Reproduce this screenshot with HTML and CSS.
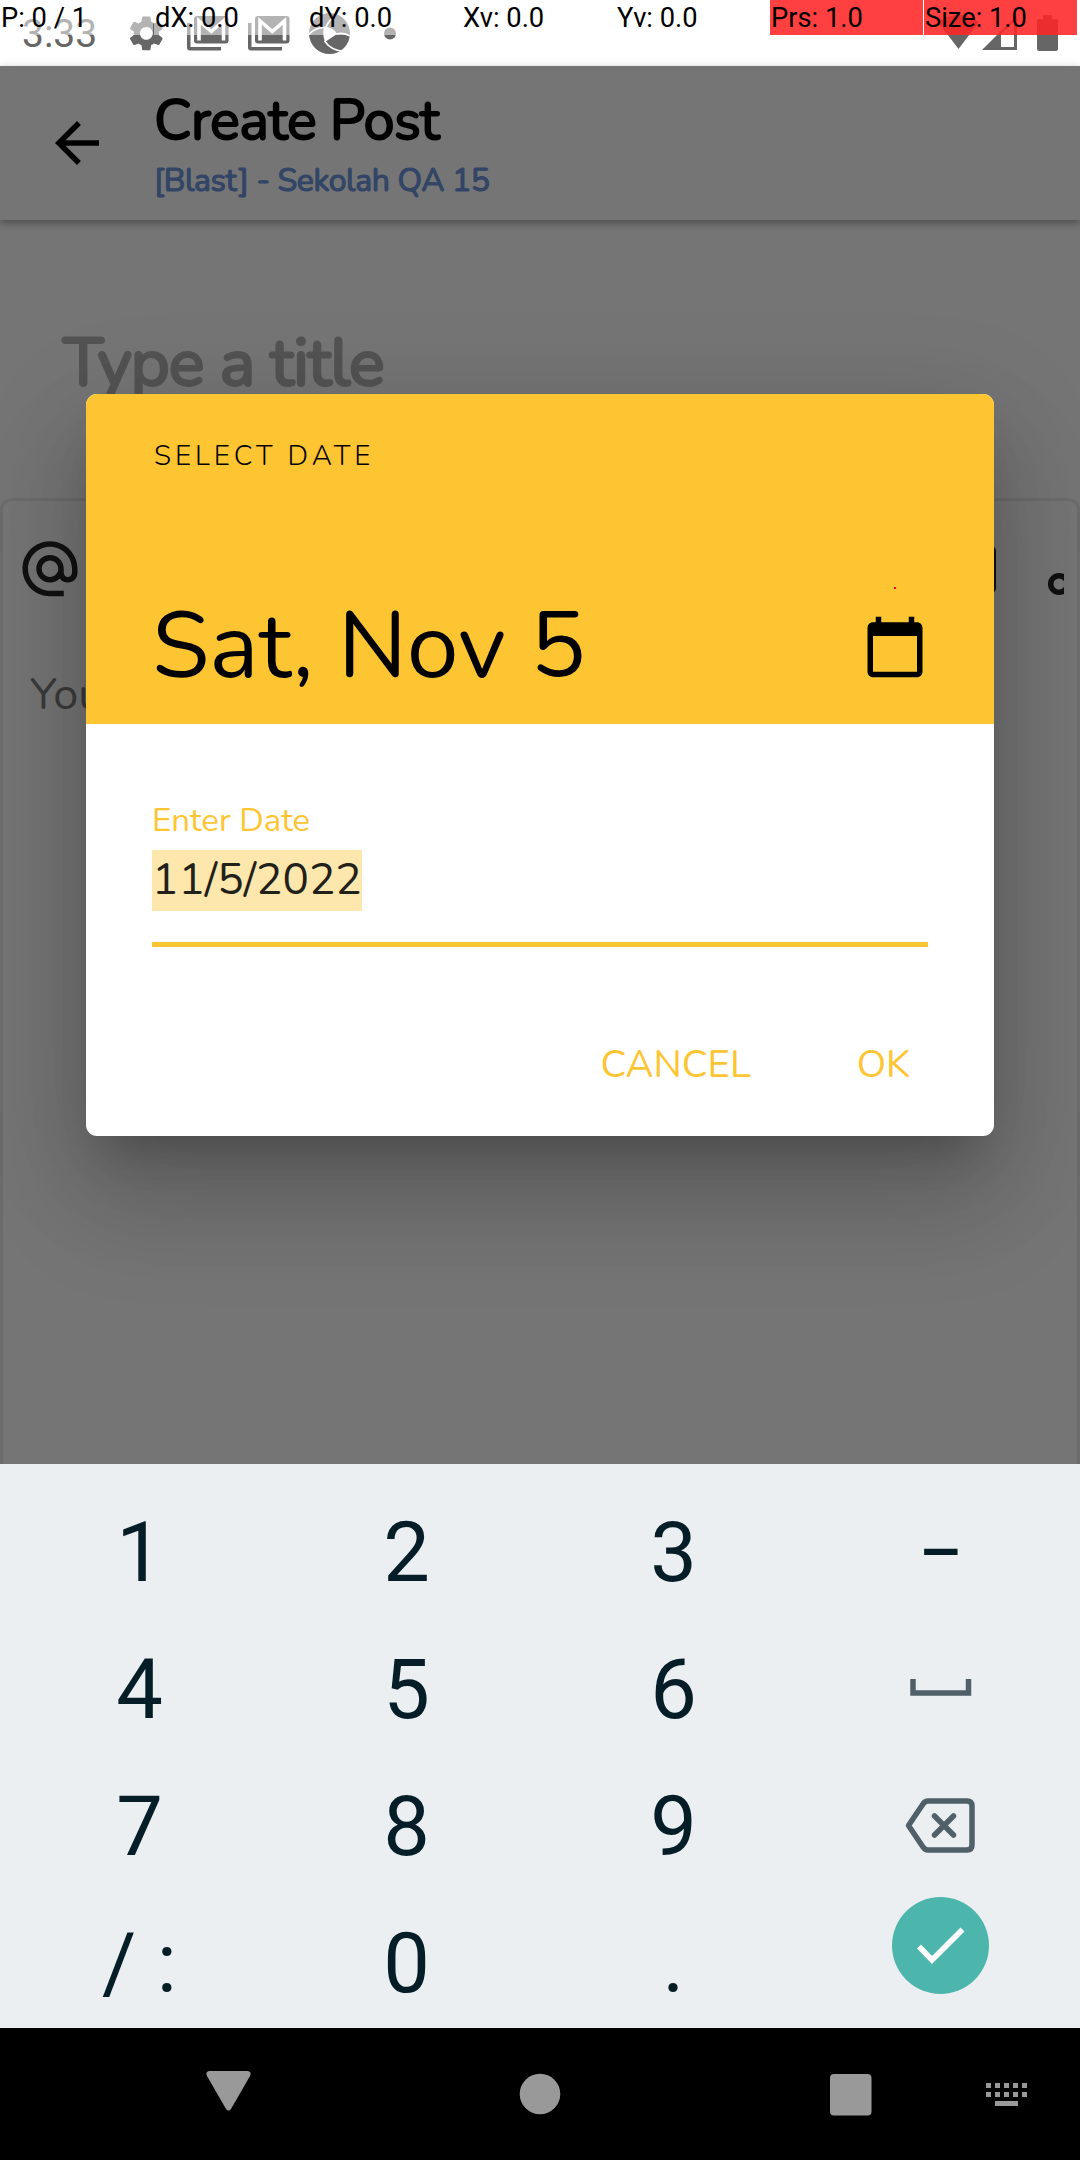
FILE: index.html
```html
<!DOCTYPE html>
<html lang="en">
<head>
<meta charset="utf-8">
<title>Create Post</title>
<link rel="stylesheet" href="styles.css">
</head>
<body>
<div class="phone">
  <div class="statusbar">
    <span class="clock">3:33</span>
    <svg class="status-icons" width="280" height="66" viewBox="120 0 280 66">
      <g transform="translate(125.3 12.4) scale(1.75)"><path d="M19.14 12.94c.04-.3.06-.61.06-.94 0-.32-.02-.64-.07-.94l2.03-1.58c.18-.14.23-.41.12-.61l-1.92-3.32c-.12-.22-.37-.29-.59-.22l-2.39.96c-.5-.38-1.03-.7-1.62-.94l-.36-2.54c-.04-.24-.24-.41-.48-.41h-3.84c-.24 0-.43.17-.47.41l-.36 2.54c-.59.24-1.13.57-1.62.94l-2.39-.96c-.22-.08-.47 0-.59.22L2.74 8.87c-.12.21-.08.47.12.61l2.03 1.58c-.05.3-.09.63-.09.94s.02.64.07.94l-2.03 1.58c-.18.14-.23.41-.12.61l1.92 3.32c.12.22.37.29.59.22l2.39-.96c.5.38 1.03.7 1.62.94l.36 2.54c.05.24.24.41.48.41h3.84c.24 0 .44-.17.47-.41l.36-2.54c.59-.24 1.13-.56 1.62-.94l2.39.96c.22.08.47 0 .59-.22l1.92-3.32c.12-.22.07-.47-.12-.61l-2.01-1.58zM12 15.6c-1.98 0-3.6-1.620-3.6-3.6s1.620-3.6 3.6-3.6 3.6 1.620 3.6 3.6-1.620 3.6-3.6 3.6z"/></g>
      <g id="mail"><rect x="194" y="16" width="34.500" height="27.500" rx="3"/><path class="mail-m" d="M199 40.500V21l12.300 10.500L223.500 21v19.500"/><path d="M187 23h3.500v24H221v3.500h-31q-3 0-3-3z"/></g>
      <use href="#mail" x="61"/>
      <circle cx="329.500" cy="33.500" r="20.500"/>
      <path class="cut" d="M324 26.500q10 1 13 7.500l-12 8q-3-8-1-15.500z"/>
      <path class="cut-line" d="M324.500 41q7 10 20 10.500M336 34q8-2 14 2M324 27.500q-9 0-15 7M326 27q3-7 10-12"/>
      <circle cx="390" cy="33.500" r="6"/>
    </svg>
    <svg class="status-icons" width="130" height="66" viewBox="935 0 130 66">
      <path d="M958.500 49L938 22q20.500-14 41 0z"/>
      <path fill-rule="evenodd" d="M982 50L1017 15V50zM1001 34V47h13V21z"/>
      <path d="M1043 15h9v4h4q2 0 2 2v28q0 2-2 2h-17q-2 0-2-2V21q0-2 2-2h4z"/>
    </svg>
    <div class="pointer-readout">
      <span>P: 0 / 1</span><span>dX: 0.0</span><span>dY: 0.0</span><span>Xv: 0.0</span><span>Yv: 0.0</span><span class="hot">Prs: 1.0</span><span class="hot">Size: 1.0</span>
    </div>
  </div>

  <header class="appbar">
    <svg width="66" height="66" viewBox="0 0 24 24"><path d="M20 11H7.830l5.590-5.590L12 4l-8 8 8 8 1.410-1.410L7.830 13H20v-2z"/></svg>
    <div>
      <h1 class="t title">Create Post</h1>
      <p class="t subtitle">[Blast] - Sekolah QA 15</p>
    </div>
  </header>

  <main class="page">
    <div class="t title-input">Type a title</div>
    <section class="editor">
      <div class="toolbar">
        <svg width="66" height="66" viewBox="0 0 24 24"><path d="M12 1.950c-5.520 0-10 4.480-10 10s4.480 10 10 10h5v-2h-5c-4.340 0-8-3.660-8-8s3.660-8 8-8 8 3.660 8 8v1.430c0 .79-.71 1.570-1.500 1.570s-1.500-.78-1.500-1.570v-1.430c0-2.760-2.240-5-5-5s-5 2.240-5 5 2.240 5 5 5c1.380 0 2.640-.56 3.540-1.470.65.89 1.770 1.470 2.960 1.470 1.970 0 3.500-1.600 3.500-3.570v-1.430c0-5.520-4.480-10-10-10zm0 13c-1.660 0-3-1.340-3-3s1.340-3 3-3 3 1.340 3 3-1.340 3-3 3z"/></svg>
        <svg width="80" height="66" viewBox="984 536 80 66"><rect x="950" y="546" width="46" height="47" rx="5"/><circle class="ring" cx="1059" cy="584" r="8.300"/></svg>
      </div>
      <p class="t body-input">You</p>
    </section>
  </main>

  <div class="dialog">
    <div class="dialog-head">
      <div class="t overline">SELECT DATE</div>
      <div class="date-row">
        <span class="t headline">Sat, Nov 5</span>
        <svg width="66" height="66" viewBox="0 0 24 24"><path d="M20 3h-1V1h-2v2H7V1H5v2H4c-1.100 0-2 .9-2 2v16c0 1.100.9 2 2 2h16c1.100 0 2-.9 2-2V5c0-1.100-.9-2-2-2zm0 18H4V8h16v13z"/></svg>
      </div>
      <i class="touch-point"></i>
    </div>
    <div class="dialog-body">
      <div class="t label">Enter Date</div>
      <div class="field"><span class="selected"><span class="t">11/5/2022</span></span></div>
      <div class="actions"><span class="t cancel">CANCEL</span><span class="t ok">OK</span></div>
    </div>
  </div>

  <div class="keyboard">
    <span>1</span><span>2</span><span>3</span><span class="dash">–</span>
    <span>4</span><span>5</span><span>6</span>
    <svg viewBox="874 1619 134 137"><path class="line space" d="M913 1679V1693H968.500V1679"/></svg>
    <span>7</span><span>8</span><span>9</span>
    <svg viewBox="874 1756 134 137"><path class="line" d="M908.500 1825.500L923 1804q2-3 5-3H967q5 0 5 5V1845q0 5-5 5H928q-3 0-5-3z"/><path class="line cross" d="M934.500 1816l19 19m0-19l-19 19"/></svg>
    <span>/ :</span><span>0</span><span>.</span>
    <svg viewBox="874 1893 134 137"><circle class="go" cx="940.500" cy="1945.500" r="48.500"/><path class="tick" d="M919 1946.500L932 1960 962.500 1929.500"/></svg>
  </div>

  <nav class="navbar">
    <svg width="1080" height="132" viewBox="0 2028 1080 132">
      <path d="M209 2071H248q4 1 2 5L231 2109q-2.500 3-5 0L207 2076q-2-4 2-5z"/>
      <circle cx="540" cy="2094" r="20.300"/>
      <rect x="830" y="2074" width="41.500" height="41.500" rx="4"/>
      <path class="dots" d="M986 2085.500h44M986 2094.500h44"/>
      <rect x="995" y="2101" width="23" height="5"/>
    </svg>
  </nav>
</div>
</body>
</html>
```
FILE: styles.css
```css
* { box-sizing: border-box; margin: 0; padding: 0; }
body { width: 1080px; height: 2160px; overflow: hidden; background: #757575; }
svg { display: block; flex: none; }
.phone { position: relative; display: flex; flex-direction: column; width: 1080px; height: 2160px; font-family: Roboto, sans-serif; }
.t { font-family: Nunito, Lato, sans-serif; white-space: nowrap; font-weight: 400; }

.statusbar { position: relative; height: 66px; flex: none; background: #fff; color: #666; display: flex; padding-left: 22px; }
.clock { font-size: 39px; line-height: 68px; width: 98px; }
.status-icons { fill: #666; }
.status-icons + .status-icons { margin-left: 535px; }
.mail-m { fill: none; stroke: #fff; stroke-width: 3.600; }
.cut { fill: #fff; }
.cut-line { fill: none; stroke: #fff; stroke-width: 1.600; }
.pointer-readout { position: absolute; inset: 0 0 auto 0; display: grid; grid-template-columns: repeat(7, 153px); gap: 1px; height: 35px; }
.pointer-readout span { background: rgba(255,255,255,.5); color: #000; font-size: 27.300px; height: 35px; line-height: 37px; padding-left: 1px; white-space: nowrap; }
.pointer-readout .hot { background: linear-gradient(rgba(255,0,0,.75), rgba(255,0,0,.75)), rgba(255,255,255,.5); }

.appbar { position: relative; height: 154px; flex: none; display: flex; gap: 44px; padding: 0 44px; background: #757575; box-shadow: 0 3px 8px rgba(0,0,0,.35); }
.appbar svg { margin-top: 44px; }
.title { font-size: 56px; line-height: 66px; margin-top: 22px; letter-spacing: -.65px; -webkit-text-stroke: 1.900px #000; }
.subtitle { font-size: 32px; line-height: 40px; margin-top: 7px; color: #324566; letter-spacing: -.38px; -webkit-text-stroke: 1.200px #324566; }

.page { flex: 1; display: flex; flex-direction: column; min-height: 0; }
.title-input { height: 278px; padding: 103px 63px 0; font-size: 67px; line-height: 80px; color: #535353; letter-spacing: -1.050px; -webkit-text-stroke: 2.800px #535353; }
.editor { flex: 1; border: 3px solid #6c6c6c; border-bottom: 0; border-radius: 12px 12px 0 0; }
.toolbar { display: flex; justify-content: space-between; padding: 35px 13px 0 14px; fill: #111; }
.ring { fill: none; stroke: #111; stroke-width: 5.500; }
.body-input { padding: 65px 27px 0; font-size: 45px; line-height: 56px; color: #3b3b3b; }

.dialog { position: absolute; left: 86px; top: 394px; width: 908px; height: 742px; border-radius: 11px; overflow: hidden; background: #fff; box-shadow: 0 30px 41px -19px rgba(0,0,0,.2), 0 66px 105px 8px rgba(0,0,0,.14), 0 25px 110px 12px rgba(0,0,0,.1); }
.dialog-head { position: relative; height: 330px; background: #fec532; padding: 45px 66px 0 67px; }
.overline { font-size: 28px; line-height: 34px; letter-spacing: 3.900px; font-weight: 350; padding-left: 1px; }
.date-row { display: flex; justify-content: space-between; margin-top: 84px; height: 123px; }
.headline { font-size: 93.200px; line-height: 123px; margin: 28px 0 0 -1px; }
.date-row svg { margin-top: 57px; }
.touch-point { position: absolute; left: 808px; top: 193px; width: 2px; height: 2px; background: red; }
.dialog-body { padding: 75px 66px 0; color: #fec532; }
.label { font-size: 33px; line-height: 44px; }
.field { height: 97px; border-bottom: 5.500px solid #fec532; margin-top: 7px; }
.selected { display: block; width: 210px; height: 61px; background: #fee7ad; color: #22201a; font-size: 44px; line-height: 58px; padding-left: 0; }
.actions { display: flex; justify-content: flex-end; gap: 106px; padding: 93px 18px 0; font-size: 38.300px; line-height: 50px; }

.keyboard { position: relative; height: 564px; flex: none; padding: 18px 5px 0 6px; background: #ebeff2; display: grid; grid-template-columns: repeat(4, 267px); grid-auto-rows: 137px; color: #041d27; font-size: 83px; text-align: center; line-height: 141px; }
.keyboard .dash { font-size: 67px; font-weight: 500; }
.keyboard svg { width: 134px; height: 137px; justify-self: center; }
.line { fill: none; stroke: #4f6068; stroke-width: 5.500; stroke-linejoin: round; }
.space { stroke-linejoin: miter; }
.cross { stroke-linecap: round; }
.go { fill: #4db6ac; }
.tick { fill: none; stroke: #fff; stroke-width: 5.500; }
.navbar { position: relative; height: 132px; flex: none; background: #000; fill: #999; }
.dots { stroke: #999; stroke-width: 5; stroke-dasharray: 5 4; fill: none; }
```
